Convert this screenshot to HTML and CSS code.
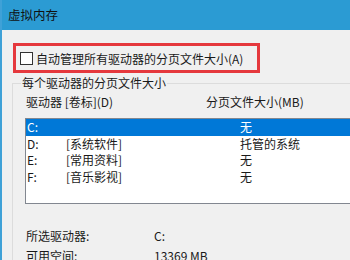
FILE: index.html
```html
<!DOCTYPE html>
<html lang="zh-CN">
<head>
    <meta charset="UTF-8">
    <title>虚拟内存</title>
    <link rel="stylesheet" href="styles.css">
</head>
<body>
    <div class="window">
        <div class="titlebar">虚拟内存</div>
        <div class="content">
            <label class="auto-box">
                <span class="checkbox"></span>
                <span>自动管理所有驱动器的分页文件大小(A)</span>
            </label>

            <fieldset class="group">
                <legend>每个驱动器的分页文件大小</legend>
                <div class="list-head">
                    <span class="head-drive">驱动器 [卷标](D)</span>
                    <span>分页文件大小(MB)</span>
                </div>
                <div class="drive-list">
                    <div class="row selected"><span class="c-drive">C:</span><span class="c-label"></span><span>无</span></div>
                    <div class="row"><span class="c-drive">D:</span><span class="c-label">[系统软件]</span><span>托管的系统</span></div>
                    <div class="row"><span class="c-drive">E:</span><span class="c-label">[常用资料]</span><span>无</span></div>
                    <div class="row"><span class="c-drive">F:</span><span class="c-label">[音乐影视]</span><span>无</span></div>
                </div>
                <div class="info first"><span class="info-label">所选驱动器:</span><span>C:</span></div>
                <div class="info"><span class="info-label">可用空间:</span><span>13369 MB</span></div>
            </fieldset>
        </div>
    </div>
</body>
</html>
```

FILE: styles.css
```css
html, body {
    margin: 0;
    padding: 0;
}
body {
    font-family: "Noto Sans CJK SC", "Noto Sans", sans-serif;
    font-size: 12px;
    color: #1a1a1a;
    background: #f0f0f0;
    width: 350px;
    height: 260px;
    overflow: hidden;
}
.window {
    height: 260px;
    border-left: 2px solid #3fa1d7;
    background: #f0f0f0;
    overflow: hidden;
}
.titlebar {
    height: 30px;
    line-height: 30px;
    background: #2b9bd3;
    color: #111;
    padding-left: 6px;
    font-size: 12.5px;
}
.content {
    padding-top: 13px;
}
.auto-box {
    display: flex;
    align-items: center;
    width: 237px;
    height: 24px;
    margin-left: 11px;
    padding-left: 4px;
    border: 3px solid #e5383d;
    box-sizing: content-box;
}
.checkbox {
    width: 11px;
    height: 11px;
    border: 1px solid #333;
    background: #fff;
    margin-right: 3px;
}
.group {
    width: 400px;
    margin: 2px 0 0 10px;
    padding: 0 0 0 8px;
    border: 1px solid #dcdcdc;
    border-right: none;
    min-width: 0;
}
.group legend {
    padding: 0 1px;
    line-height: 16px;
}
.list-head {
    display: flex;
    line-height: 16px;
    margin: 3px 0 8px;
    padding-left: 5px;
}
.head-drive {
    width: 180px;
}
.drive-list {
    margin-left: 4px;
    height: 84px;
    border: 1px solid #828790;
    background: #fff;
}
.row {
    display: flex;
    height: 16.5px;
    line-height: 16.5px;
    padding-left: 1px;
}
.row.selected {
    background: #0078d7;
    color: #fff;
}
.c-drive {
    width: 39px;
}
.c-label {
    width: 174px;
}
.info {
    display: flex;
    line-height: 20px;
    padding-left: 5px;
}
.info.first {
    margin-top: 22px;
}
.info-label {
    width: 128px;
}
```
